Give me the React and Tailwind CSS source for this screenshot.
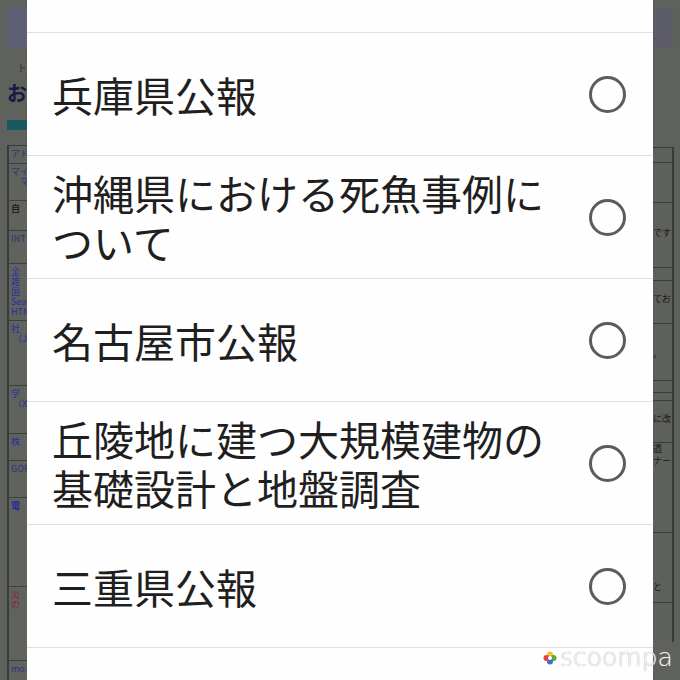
import React from "react";

const options = [
  "兵庫県公報",
  "沖縄県における死魚事例について",
  "名古屋市公報",
  "丘陵地に建つ大規模建物の基礎設計と地盤調査",
  "三重県公報",
];

const leftCells = [
  { h: 18, lines: ["アド"], color: "text-[#2d347a]" },
  { h: 37, lines: ["マイ", "　マ"], color: "text-[#2d347a]" },
  { h: 30, lines: ["", "自"], color: "text-[#222] font-bold" },
  { h: 33, lines: ["", "INT"], color: "text-[#2d347a]" },
  { h: 57, lines: ["全", "雑", "国", "Sea", "HTM"], color: "text-[#2a2fa0]" },
  { h: 65, lines: ["社", " （J"], color: "text-[#2a2fa0]" },
  { h: 48, lines: ["学", " （X"], color: "text-[#2a2fa0]" },
  { h: 27, lines: ["株"], color: "text-[#2a2fa0]" },
  { h: 37, lines: ["", "GOR"], color: "text-[#2d347a]" },
  { h: 89, lines: ["", "", "", "電"], color: "text-[#1f2a9c] font-bold" },
  { h: 74, lines: ["", "災", "の"], color: "text-[#8a1f4a]" },
  { h: 40, lines: ["mo.l"], color: "text-[#2d347a]" },
];

const rightCells = [
  { h: 15, text: "" },
  { h: 40, text: "" },
  { h: 65, text: "\n\nです" },
  { h: 13, text: "" },
  { h: 43, text: "\nてお" },
  { h: 57, text: "\n\n。" },
  { h: 12, text: "" },
  { h: 8, text: "" },
  { h: 42, text: "\nに改" },
  { h: 90, text: "遺\nナー" },
  { h: 70, text: "\n\n\n\nと" },
  { h: 40, text: "" },
];

function Radio() {
  return (
    <div className="w-[37px] h-[37px] shrink-0 rounded-full border-[3px] border-[#5c5c5c]" />
  );
}

export default function App() {
  return (
    <div
      className="relative w-[680px] h-[680px] overflow-hidden bg-[#5f615c]"
      style={{ fontFamily: '"Noto Sans CJK JP", "Noto Sans", sans-serif' }}
    >
      {/* dimmed page behind the dialog */}
      <div className="flex h-full bg-[#5f615c]">
        <div className="w-[27px] shrink-0 pl-[7px] pt-[8px] flex flex-col">
          <div className="h-[40px] w-[40px] shrink-0 rounded-sm bg-[#5d5f74]" />
          <div className="h-[28px] shrink-0 pt-[14px] pl-[10px] text-[10px] leading-[12px] text-[#333]">ト</div>
          <div className="h-[44px] shrink-0 pt-[6px] text-[20px] leading-[22px] font-bold text-[#161a45]">お</div>
          <div className="h-[10px] w-[40px] shrink-0 bg-[#175a62]" />
          <div className="mt-[15px] border-l-2 border-t border-[#3a3c38] flex flex-col">
            {leftCells.map((c, i) => (
              <div
                key={i}
                className={`shrink-0 overflow-hidden border-b border-[#3e403c] bg-[#60625d] text-[9px] leading-[10px] pl-[2px] pt-[3px] ${c.color}`}
                style={{ height: c.h }}
              >
                {c.lines.map((l, j) => (
                  <div key={j} className="whitespace-pre">{l}</div>
                ))}
              </div>
            ))}
          </div>
        </div>
        <div className="flex-1" />
        <div className="w-[27px] shrink-0 pt-[8px] flex flex-col">
          <div className="h-[40px] w-[20px] shrink-0 bg-[#5b5c68] flex items-end pb-[8px] text-[8px] leading-none text-[#6a2a4a]">
            ..
          </div>
          <div className="mt-[99px] w-[21px] border-r-2 border-[#3a3c38] flex flex-col">
            {rightCells.map((c, i) => (
              <div
                key={i}
                className="shrink-0 border-t border-[#3a3c38] bg-[#5e605b] text-[9px] leading-[12px] text-[#1a1a1a] whitespace-pre overflow-hidden"
                style={{ height: c.h }}
              >
                {c.text}
              </div>
            ))}
          </div>
        </div>
      </div>

      {/* dialog */}
      <div className="absolute top-0 bottom-0 left-[27px] w-[626px] bg-[#fdfefd] flex flex-col">
        <div className="h-[32px] shrink-0" />
        {options.map((t) => (
          <div
            key={t}
            className="h-[123px] shrink-0 border-t border-[#dedfde] flex items-center pl-[25px] pr-[27px]"
          >
            <div className="flex-1 pr-[40px] text-[41px] leading-[49px] text-[#1f1f1f]">{t}</div>
            <Radio />
          </div>
        ))}
        <div className="flex-1 border-t border-[#dedfde]" />
      </div>

      {/* watermark */}
      <div className="absolute left-[543px] top-[645px] flex items-center gap-[3px]">
        <svg width="14" height="14" viewBox="0 0 14 14">
          <circle cx="7" cy="3.5" r="3" fill="#f2c230" />
          <circle cx="10.5" cy="7" r="3" fill="#5aa83c" />
          <circle cx="7" cy="10.5" r="3" fill="#3b6fd6" />
          <circle cx="3.5" cy="7" r="3" fill="#e0443a" />
          <circle cx="7" cy="7" r="2" fill="#ffffff" />
        </svg>
        <span
          className="text-[25px] leading-none font-light text-white/90 [text-shadow:0_0_1px_#8a8a8a]"
          style={{ fontFamily: '"DejaVu Sans", sans-serif' }}
        >
          scoompa
        </span>
      </div>
    </div>
  );
}
